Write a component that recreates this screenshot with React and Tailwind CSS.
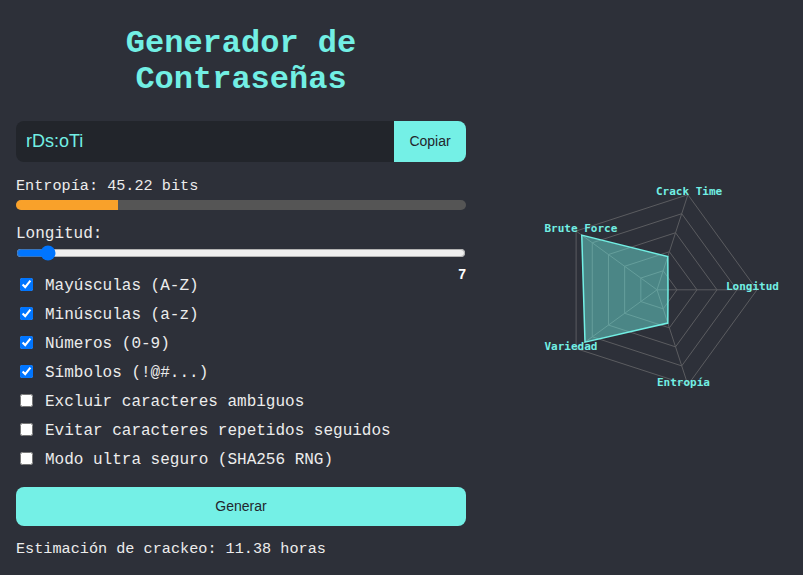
import React, { useState } from "react";

const mono = {
  fontFamily: '"Courier New", Courier, "Nimbus Mono PS", FreeMono, "Liberation Mono", monospace',
};
const sans = { fontFamily: '"Liberation Sans", Arial, sans-serif' };

const OPTIONS = [
  { label: "Mayúsculas (A-Z)", checked: true },
  { label: "Minúsculas (a-z)", checked: true },
  { label: "Números (0-9)", checked: true },
  { label: "Símbolos (!@#...)", checked: true },
  { label: "Excluir caracteres ambiguos", checked: false },
  { label: "Evitar caracteres repetidos seguidos", checked: false },
  { label: "Modo ultra seguro (SHA256 RNG)", checked: false },
];

// radar axes, counter-clockwise from the right
const AXES = [
  { name: "Longitud", angle: 0, value: 11, lx: 199, ly: 122.2 },
  { name: "Crack Time", angle: 72, value: 35, lx: 129, ly: 27.2 },
  { name: "Brute Force", angle: 144, value: 93, lx: 17.5, ly: 63.5 },
  { name: "Variedad", angle: 216, value: 89, lx: 17.5, ly: 181.5 },
  { name: "Entropía", angle: 288, value: 35, lx: 130, ly: 217.8 },
];

const CX = 130;
const CY = 121.8;
const R = 100;

const pt = (angle, r) => {
  const a = (angle * Math.PI) / 180;
  return [CX + r * Math.cos(a), CY - r * Math.sin(a)];
};

const ring = (r) => AXES.map((ax) => pt(ax.angle, r).join(",")).join(" ");

const RadarChart = () => {
  const data = AXES.map((ax) => pt(ax.angle, (ax.value / 100) * R).join(",")).join(" ");
  return (
    <svg width="260" height="240" viewBox="0 0 260 240">
      {[20, 40, 60, 80, 100].map((r) => (
        <polygon key={r} points={ring(r)} fill="none" stroke="#5b5c60" strokeWidth="1" />
      ))}
      {AXES.map((ax) => {
        const [x, y] = pt(ax.angle, R);
        return <line key={ax.name} x1={CX} y1={CY} x2={x} y2={y} stroke="#5b5c60" strokeWidth="1" />;
      })}
      <polygon
        points={data}
        fill="rgb(114,239,228)"
        fillOpacity="0.45"
        stroke="#72efe4"
        strokeWidth="1.5"
      />
      {AXES.map((ax) => (
        <text
          key={ax.name}
          x={ax.lx}
          y={ax.ly}
          fill="#72efe4"
          fontSize="11"
          fontWeight="bold"
          style={{ fontFamily: '"DejaVu Sans Mono", monospace' }}
        >
          {ax.name}
        </text>
      ))}
    </svg>
  );
};

export default function App() {
  const [length, setLength] = useState(7);
  const [opts, setOpts] = useState(OPTIONS.map((o) => o.checked));

  return (
    <div className="flex h-screen bg-[#2d3039] px-4 text-[#ececec]">
      {/* Left: generator */}
      <div className="w-[450px] shrink-0">
        <h1
          className="mt-[26px] text-center text-[32px] font-bold leading-[36px] text-[#72efe4]"
          style={mono}
        >
          Generador de
          <br />
          Contraseñas
        </h1>

        <div className="mt-[23px] flex h-[41px] overflow-hidden rounded-lg">
          <div
            className="flex flex-1 items-center bg-[#22252b] pl-[10px] text-[18px] text-[#72efe4]"
            style={sans}
          >
            rDs:oTi
          </div>
          <button
            className="w-[72px] bg-[#74f0e6] text-[14px] font-medium text-[#23262d]"
            style={sans}
          >
            Copiar
          </button>
        </div>

        <p className="mt-4 text-[15.2px] leading-[17px]" style={mono}>
          Entropía: 45.22 bits
        </p>
        <div className="mt-[5px] h-[10px] overflow-hidden rounded-full bg-[#555555]">
          <div className="h-full w-[22.6%] bg-[#f9a12a]" />
        </div>

        <p className="mt-[15px] text-[16px] leading-[18px]" style={mono}>
          Longitud:
        </p>
        <input
          type="range"
          min="6"
          max="24"
          value={length}
          onChange={(e) => setLength(Number(e.target.value))}
          className="mt-[2px] block h-4 w-full"
        />
        <div className="mt-[5px] flex h-[11px] justify-end">
          <span className="text-[14px] font-bold leading-[16px] text-white" style={sans}>
            {length}
          </span>
        </div>

        <div className="flex flex-col gap-[11px]">
          {OPTIONS.map((o, i) => (
            <label key={o.label} className="flex h-[18px] items-start">
              <input
                type="checkbox"
                checked={opts[i]}
                onChange={() => setOpts(opts.map((v, j) => (j === i ? !v : v)))}
                className="ml-1 mt-[1px] h-[13px] w-[13px]"
              />
              <span className="ml-3 text-[16px] leading-[18px]" style={mono}>
                {o.label}
              </span>
            </label>
          ))}
        </div>

        <button
          className="mt-[18px] h-[39px] w-full rounded-lg bg-[#74f0e6] text-[14px] font-medium text-[#23262d]"
          style={sans}
        >
          Generar
        </button>

        <p className="mt-[15px] text-[15.2px] leading-[17px]" style={mono}>
          Estimación de crackeo: 11.38 horas
        </p>
      </div>

      {/* Right: radar */}
      <div className="flex flex-1 items-center justify-center pl-[61px]">
        <RadarChart />
      </div>
    </div>
  );
}
